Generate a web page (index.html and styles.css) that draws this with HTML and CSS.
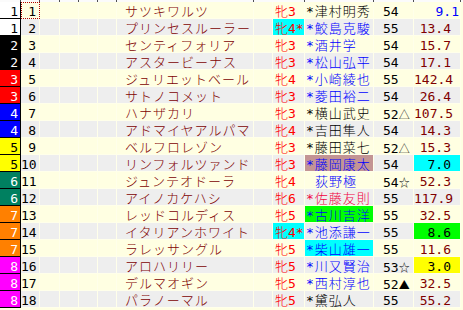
FILE: index.html
```html
<!DOCTYPE html>
<html lang="ja">
<head>
<meta charset="utf-8">
<link rel="stylesheet" href="styles.css">
</head>
<body>
<div class="sheet">
  <div class="row hdr">
    <div class="h"></div><div class="h"></div><div class="h"></div><div class="h"></div><div class="h"></div><div class="h"></div><div class="h"></div><div class="h nob"></div><div class="h"></div><div class="h"></div><div class="h"></div><div class="h"></div><div class="h nob"></div>
  </div>

  <div class="row odd">
    <div class="c fr f1">1</div><div class="c no sel">1</div><div class="c"></div><div class="c"></div><div class="c"></div><div class="c"></div>
    <div class="c nm">サツキワルツ</div><div class="c"></div><div class="c sx">牝3</div><div class="c jk">*津村明秀</div><div class="c wt">54</div><div class="c od blue tight">9.1</div><div class="rest"></div>
  </div>
  <div class="row even">
    <div class="c fr f1">1</div><div class="c no">2</div><div class="c"></div><div class="c"></div><div class="c"></div><div class="c"></div>
    <div class="c nm">プリンセスルーラー</div><div class="c"></div><div class="c sx cyan">牝4*</div><div class="c jk blue">*鮫島克駿</div><div class="c wt">55</div><div class="c od">13.4</div><div class="rest"></div>
  </div>
  <div class="row odd">
    <div class="c fr f2">2</div><div class="c no">3</div><div class="c"></div><div class="c"></div><div class="c"></div><div class="c"></div>
    <div class="c nm">センティフォリア</div><div class="c"></div><div class="c sx">牝3</div><div class="c jk blue">*酒井学</div><div class="c wt">54</div><div class="c od">15.7</div><div class="rest"></div>
  </div>
  <div class="row even">
    <div class="c fr f2">2</div><div class="c no">4</div><div class="c"></div><div class="c"></div><div class="c"></div><div class="c"></div>
    <div class="c nm">アスタービーナス</div><div class="c"></div><div class="c sx">牝3</div><div class="c jk blue">*松山弘平</div><div class="c wt">54</div><div class="c od">17.1</div><div class="rest"></div>
  </div>
  <div class="row odd">
    <div class="c fr f3">3</div><div class="c no">5</div><div class="c"></div><div class="c"></div><div class="c"></div><div class="c"></div>
    <div class="c nm">ジュリエットベール</div><div class="c"></div><div class="c sx">牝4</div><div class="c jk blue">*小崎綾也</div><div class="c wt">55</div><div class="c od">142.4</div><div class="rest"></div>
  </div>
  <div class="row even">
    <div class="c fr f3">3</div><div class="c no">6</div><div class="c"></div><div class="c"></div><div class="c"></div><div class="c"></div>
    <div class="c nm">サトノコメット</div><div class="c"></div><div class="c sx">牝3</div><div class="c jk blue">*菱田裕二</div><div class="c wt">54</div><div class="c od">26.4</div><div class="rest"></div>
  </div>
  <div class="row odd">
    <div class="c fr f4">4</div><div class="c no">7</div><div class="c"></div><div class="c"></div><div class="c"></div><div class="c"></div>
    <div class="c nm">ハナザカリ</div><div class="c"></div><div class="c sx">牝3</div><div class="c jk">*横山武史</div><div class="c wt">52<span class="sym">△</span></div><div class="c od">107.5</div><div class="rest"></div>
  </div>
  <div class="row even">
    <div class="c fr f4">4</div><div class="c no">8</div><div class="c"></div><div class="c"></div><div class="c"></div><div class="c"></div>
    <div class="c nm">アドマイヤアルパマ</div><div class="c"></div><div class="c sx">牝4</div><div class="c jk">*吉田隼人</div><div class="c wt">54</div><div class="c od">14.3</div><div class="rest"></div>
  </div>
  <div class="row odd">
    <div class="c fr f5">5</div><div class="c no">9</div><div class="c"></div><div class="c"></div><div class="c"></div><div class="c"></div>
    <div class="c nm">ベルフロレゾン</div><div class="c"></div><div class="c sx">牝3</div><div class="c jk">*藤田菜七</div><div class="c wt">52<span class="sym">△</span></div><div class="c od">15.3</div><div class="rest"></div>
  </div>
  <div class="row even">
    <div class="c fr f5">5</div><div class="c no">10</div><div class="c"></div><div class="c"></div><div class="c"></div><div class="c"></div>
    <div class="c nm">リンフォルツァンド</div><div class="c"></div><div class="c sx">牝3</div><div class="c jk blue rosy">*藤岡康太</div><div class="c wt">54</div><div class="c od cyan blk">7.0</div><div class="rest"></div>
  </div>
  <div class="row odd">
    <div class="c fr f6">6</div><div class="c no">11</div><div class="c"></div><div class="c"></div><div class="c"></div><div class="c"></div>
    <div class="c nm">ジュンテオドーラ</div><div class="c"></div><div class="c sx">牝4</div><div class="c jk blue ind">荻野極</div><div class="c wt">54<span class="sym">☆</span></div><div class="c od">52.3</div><div class="rest"></div>
  </div>
  <div class="row even">
    <div class="c fr f6">6</div><div class="c no">12</div><div class="c"></div><div class="c"></div><div class="c"></div><div class="c"></div>
    <div class="c nm">アイノカケハシ</div><div class="c"></div><div class="c sx">牝6</div><div class="c jk crim">*佐藤友則</div><div class="c wt">55</div><div class="c od">117.9</div><div class="rest"></div>
  </div>
  <div class="row odd">
    <div class="c fr f7">7</div><div class="c no">13</div><div class="c"></div><div class="c"></div><div class="c"></div><div class="c"></div>
    <div class="c nm">レッドコルディス</div><div class="c"></div><div class="c sx">牝5</div><div class="c jk blue green">*古川吉洋</div><div class="c wt">55</div><div class="c od">32.5</div><div class="rest"></div>
  </div>
  <div class="row even">
    <div class="c fr f7">7</div><div class="c no">14</div><div class="c"></div><div class="c"></div><div class="c"></div><div class="c"></div>
    <div class="c nm">イタリアンホワイト</div><div class="c"></div><div class="c sx cyan">牝4*</div><div class="c jk blue">*池添謙一</div><div class="c wt">55</div><div class="c od green blk">8.6</div><div class="rest"></div>
  </div>
  <div class="row odd">
    <div class="c fr f7">7</div><div class="c no">15</div><div class="c"></div><div class="c"></div><div class="c"></div><div class="c"></div>
    <div class="c nm">ラレッサングル</div><div class="c"></div><div class="c sx">牝5</div><div class="c jk blue cyan">*柴山雄一</div><div class="c wt">55</div><div class="c od">11.6</div><div class="rest"></div>
  </div>
  <div class="row even">
    <div class="c fr f8">8</div><div class="c no">16</div><div class="c"></div><div class="c"></div><div class="c"></div><div class="c"></div>
    <div class="c nm">アロハリリー</div><div class="c"></div><div class="c sx">牝5</div><div class="c jk blue">*川又賢治</div><div class="c wt">53<span class="sym">☆</span></div><div class="c od yel blk">3.0</div><div class="rest"></div>
  </div>
  <div class="row odd">
    <div class="c fr f8">8</div><div class="c no">17</div><div class="c"></div><div class="c"></div><div class="c"></div><div class="c"></div>
    <div class="c nm">デルマオギン</div><div class="c"></div><div class="c sx">牝5</div><div class="c jk blue">*西村淳也</div><div class="c wt">52<span class="sym">▲</span></div><div class="c od">32.5</div><div class="rest"></div>
  </div>
  <div class="row even">
    <div class="c fr f8">8</div><div class="c no">18</div><div class="c"></div><div class="c"></div><div class="c"></div><div class="c"></div>
    <div class="c nm">パラノーマル</div><div class="c"></div><div class="c sx">牝5</div><div class="c jk">*黛弘人</div><div class="c wt">55</div><div class="c od">55.2</div><div class="rest"></div>
  </div>
</div>
</body>
</html>
```

FILE: styles.css
```css
:root {
  --yellow: #ffffe2;
  --gray: #eeeeee;
  --grid: #ffffea;
}

html, body {
  margin: 0;
  padding: 0;
  background: var(--yellow);
}

body {
  font-family: "DejaVu Sans Mono", "Noto Sans CJK JP", monospace;
  font-size: 13px;
  font-weight: 300;
  color: #000;
  width: 463px;
  height: 310px;
  overflow: hidden;
}

.sheet {
  display: flex;
  flex-direction: column;
}

.row {
  display: grid;
  grid-template-columns: 21px 19px 20px 19px 19px 19px 137px 19px 32px 69px 40px 47px 1fr;
  height: 17px;
}

.hdr {
  height: 2px;
  background: #fbfbfb;
}

.h {
  border-right: 1px solid #505050;
}

.h.nob {
  border-right-color: transparent;
}

.odd { background: var(--yellow); }
.even { background: var(--gray); }

.c {
  box-sizing: border-box;
  height: 17px;
  padding-top: 4px;
  line-height: 12px;
  border-right: 1px solid var(--grid);
  border-bottom: 1px solid var(--grid);
  white-space: nowrap;
}

.rest {
  background: var(--yellow);
}

.fr {
  text-align: right;
  padding-right: 2px;
  border-right: 1px solid #000;
  border-bottom: 1px solid #000;
}

.f1 { background: #ffffff; color: #000; }
.f2 { background: #000000; color: #fff; }
.f3 { background: #ff0000; color: #fff; }
.f4 { background: #0000ff; color: #fff; }
.f5 { background: #ffff00; color: #000; }
.f6 { background: #008060; color: #fff; }
.f7 { background: #ff8000; color: #fff; }
.f8 { background: #ff00ff; color: #fff; }

.no {
  text-align: right;
  padding-right: 3px;
}

.sel {
  outline: 1px dotted #b00000;
  outline-offset: -1px;
}

.nm {
  color: #800000;
  padding-left: 8px;
  letter-spacing: 1px;
}

.sx {
  color: #ff0000;
  padding-left: 2px;
}

.jk {
  padding-left: 1px;
  letter-spacing: 1px;
}

.jk.ind {
  padding-left: 10px;
}

.wt {
  padding-left: 9px;
}

.sym {
  font-family: "Noto Sans CJK JP", sans-serif;
  font-size: 11px;
}

.od {
  text-align: right;
  padding-right: 9px;
  color: #800000;
}

.od.tight {
  padding-right: 1px;
}

.blue { color: #0000ff; }
.crim { color: #f00040; }
.blk { color: #000; }

.cyan { background: #00ffff; }
.green { background: #00ff00; }
.yel { background: #ffff00; }
.rosy { background: #c39494; }
```
